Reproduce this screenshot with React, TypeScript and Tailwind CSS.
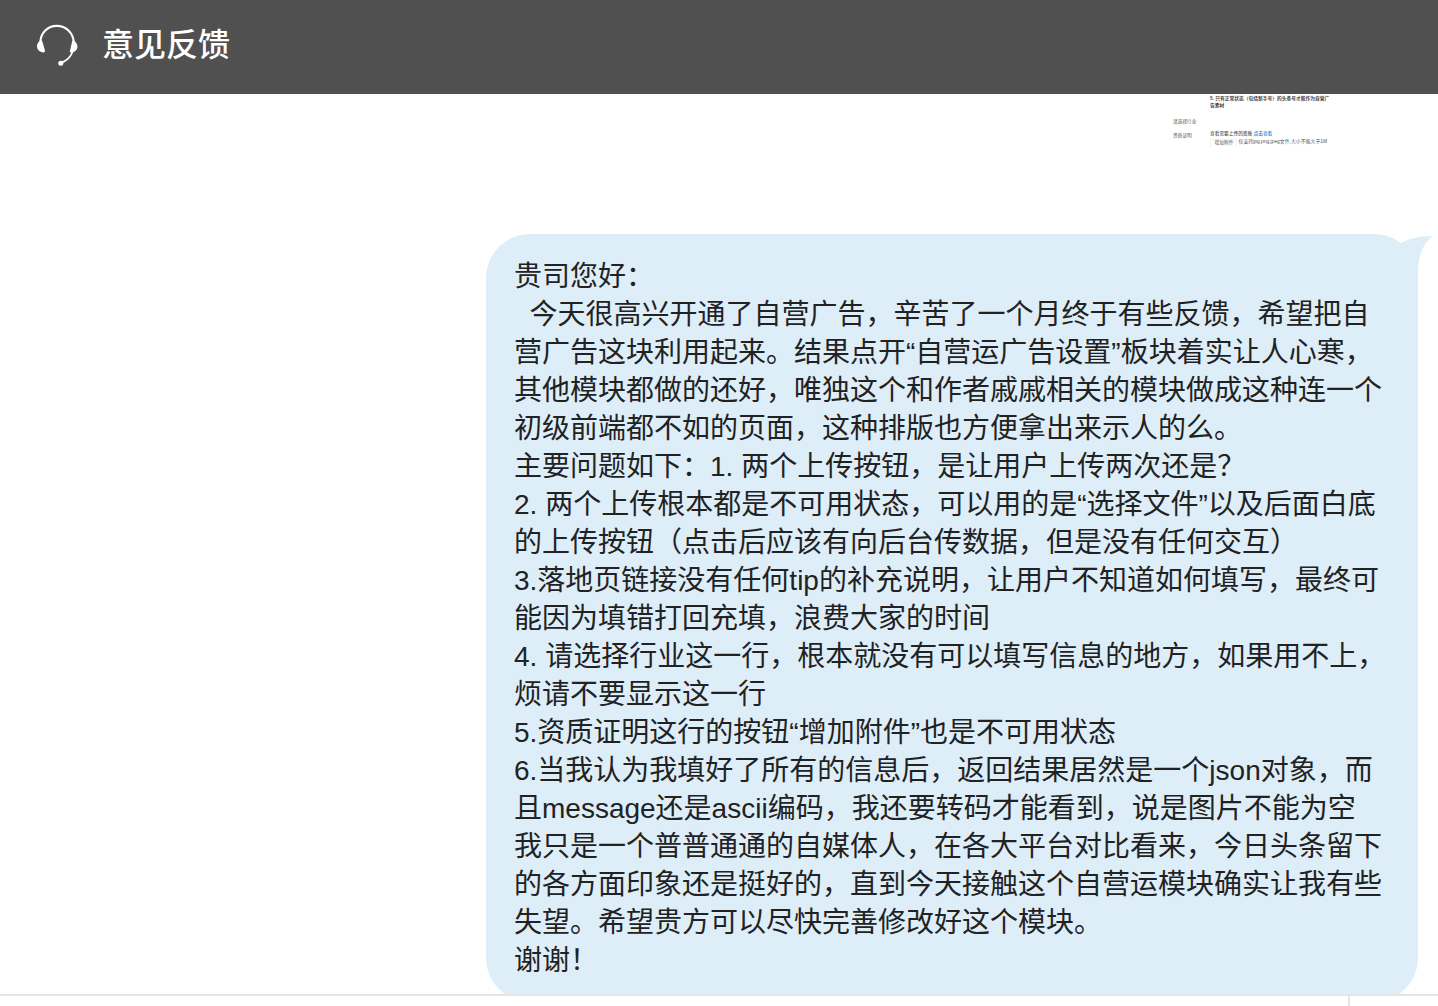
const messageLines = [
  '贵司您好：',
  '  今天很高兴开通了自营广告，辛苦了一个月终于有些反馈，希望把自',
  '营广告这块利用起来。结果点开“自营运广告设置”板块着实让人心寒，',
  '其他模块都做的还好，唯独这个和作者戚戚相关的模块做成这种连一个',
  '初级前端都不如的页面，这种排版也方便拿出来示人的么。',
  '主要问题如下：1. 两个上传按钮，是让用户上传两次还是？',
  '2. 两个上传根本都是不可用状态，可以用的是“选择文件”以及后面白底',
  '的上传按钮（点击后应该有向后台传数据，但是没有任何交互）',
  '3.落地页链接没有任何tip的补充说明，让用户不知道如何填写，最终可',
  '能因为填错打回充填，浪费大家的时间',
  '4. 请选择行业这一行，根本就没有可以填写信息的地方，如果用不上，',
  '烦请不要显示这一行',
  '5.资质证明这行的按钮“增加附件”也是不可用状态',
  '6.当我认为我填好了所有的信息后，返回结果居然是一个json对象，而',
  '且message还是ascii编码，我还要转码才能看到，说是图片不能为空',
  '我只是一个普普通通的自媒体人，在各大平台对比看来，今日头条留下',
  '的各方面印象还是挺好的，直到今天接触这个自营运模块确实让我有些',
  '失望。希望贵方可以尽快完善修改好这个模块。',
  '谢谢！',
];

function HeadsetIcon() {
  return (
    <svg width="42" height="42" viewBox="0 0 42 42" fill="none" className="shrink-0">
      <path d="M4.3 18C4.8 9 11.5 1.9 20.8 1.900S37 9 37.800 18" stroke="white" strokeWidth="2.1" />
      <path d="M4.300 16.500C2.100 18 .9 20.300 1 22.500c.2 3.300 2.600 5.400 6.400 5.900C9 28.400 9.100 27 8.700 25.500L6.500 18C6.200 16.800 5.200 16 4.300 16.500Z" fill="white" />
      <path d="M37.700 16.500c2.200 1.500 3.800 3.900 3.800 6.200 0 2.600-2 4.700-4.600 5.600-1.700.6-3.400.3-3-1.300L36 18c.3-1.300.9-2 1.700-1.500Z" fill="white" />
      <path d="M36.900 27C35 32.500 31.500 36.500 25 38.800" stroke="white" strokeWidth="1.800" />
      <circle cx="24.800" cy="39.200" r="2.500" fill="white" />
    </svg>
  );
}

function Attachment() {
  return (
    <div className="flex h-[140px] w-[265px] shrink-0 self-end pt-[2px] text-[4.7px] leading-[6.6px] text-[#555]">
      <div className="w-[37px] shrink-0">
        <p className="mt-[23px]">请选择行业</p>
        <p className="mt-[7.500px]">资质证明</p>
      </div>
      <div className="whitespace-nowrap">
        <p className="text-[4.760px] font-bold text-[#444]">
          5. 只有正常状态（包括新手号）的头条号才能作为自营广
          <br />
          告素材
        </p>
        <p className="mt-[21.500px] font-medium">
          查看需要上传的资质 <span className="text-[#1683c7]">点击查看</span>
        </p>
        <div className="mt-[1.500px] flex h-[8px] items-center">
          <span className="mr-[1.500px] h-full w-[27px] border-x border-t border-[#f1f1f1] pl-px text-center">增加附件</span>
          <span className="text-[4.900px]">仅支持jpg,png,jpeg文件,大小不能大于1M</span>
        </div>
      </div>
    </div>
  );
}

function MessageBubble() {
  return (
    <div className="relative ml-[486px] h-[768px] w-[932px] shrink-0 rounded-[44px] bg-[#deeef9] pt-6 pl-7 text-[28px] leading-[38px] text-[#222]">
      {messageLines.map((line) => (
        <p key={line} className="whitespace-pre">{line}</p>
      ))}
      <svg className="absolute top-0 -right-4" width="40" height="50" viewBox="0 0 40 50">
        <path d="M5 10C14 5 24 2 39.500 2C30 8 24 20 24 40L5 42Z" fill="#deeef9" />
      </svg>
    </div>
  );
}

export default function App() {
  return (
    <div className="flex h-screen flex-col overflow-hidden bg-white font-['Liberation_Sans','Noto_Sans_CJK_SC',sans-serif]">
      <header className="flex h-[94px] shrink-0 items-center bg-[#505050] pb-1 pl-9 text-white">
        <HeadsetIcon />
        <h1 className="ml-6 text-[32px] font-medium leading-[44px]">意见反馈</h1>
      </header>

      <main className="flex min-h-0 flex-1 flex-col overflow-hidden">
        <Attachment />
        <MessageBubble />
      </main>

      <footer className="flex h-3 shrink-0 border-t-2 border-[#e5e5e5]">
        <div className="w-[1350px] border-r-2 border-[#e5e5e5]" />
      </footer>
    </div>
  );
}
